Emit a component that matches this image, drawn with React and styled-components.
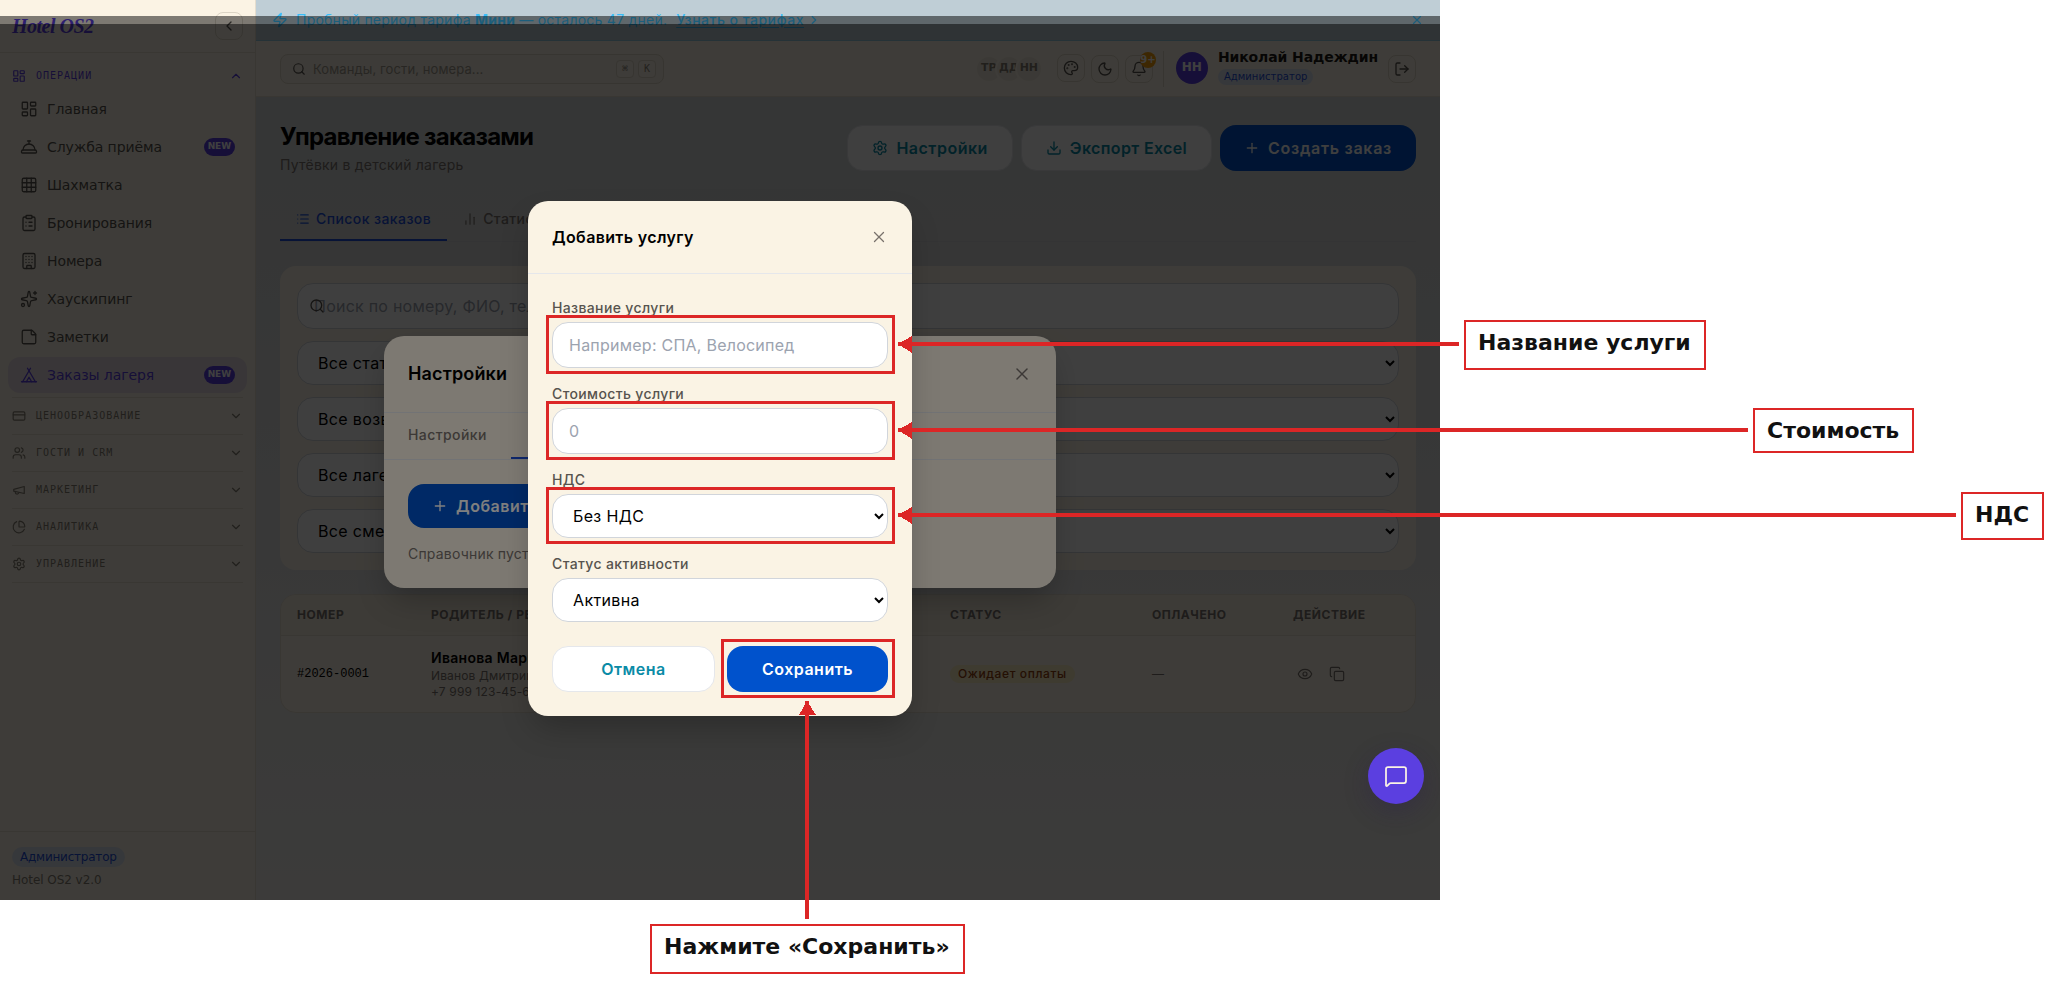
import React from 'react';
import styled, {createGlobalStyle, css} from "styled-components";
import {
    LayoutDashboard, ConciergeBell, Grid3x3, ClipboardList, Building, Sparkles, StickyNote, Tent,
    CreditCard, Users, ChartPie, Settings, ChevronLeft, ChevronUp, ChevronDown, ChevronRight,
    Zap, X, Search, Palette, Moon, Bell, LogOut, Download, Plus, List, ChartNoAxesColumn, Eye, Copy, MessageSquare
} from "lucide-react";

const NAV = [
    {label: "Главная", icon: LayoutDashboard},
    {label: "Служба приёма", icon: ConciergeBell, isNew: true},
    {label: "Шахматка", icon: Grid3x3},
    {label: "Бронирования", icon: ClipboardList},
    {label: "Номера", icon: Building},
    {label: "Хаускипинг", icon: Sparkles},
    {label: "Заметки", icon: StickyNote},
    {label: "Заказы лагеря", icon: Tent, isNew: true, active: true},
];

const SECTIONS = [
    {label: "Ценообразование", icon: CreditCard},
    {label: "Гости и CRM", icon: Users},
    {label: "Маркетинг", icon: Megaphone},
    {label: "Аналитика", icon: ChartPie},
    {label: "Управление", icon: Settings},
];

const FILTERS = ["Все статусы", "Все возвраты", "Все лагеря", "Все смены"];

//annotation layer: frames around fields, arrows and captions
const FRAMES = [
    {x: 546, y: 315, w: 349, h: 59},
    {x: 546, y: 401, w: 349, h: 59},
    {x: 546, y: 487, w: 349, h: 57},
    {x: 721, y: 639, w: 174, h: 59},
];

const ARROWS = [
    {y: 344, to: 1459},
    {y: 430, to: 1748},
    {y: 515, to: 1956},
];

const CAPTIONS = [
    {text: "Название услуги", x: 1464, y: 320, w: 242, h: 50},
    {text: "Стоимость", x: 1753, y: 408, w: 161, h: 45},
    {text: "НДС", x: 1961, y: 492, w: 83, h: 48},
    {text: "Нажмите «Сохранить»", x: 650, y: 924, w: 315, h: 50},
];

export default function App() {
    return <Board>
        <GlobalStyle/>
        <Screen>
            <Sidebar/>
            <Page>
                <TrialBanner/>
                <TopBar/>
                <Orders/>
            </Page>
            <Overlay $top={24}>
                <SettingsModal/>
            </Overlay>
            <Overlay $top={16}>
                <ServiceModal/>
            </Overlay>
            <ChatButton><MessageSquare size={24} strokeWidth={1.75}/></ChatButton>
        </Screen>
        <Annotations/>
    </Board>
}

function Megaphone({size}) {
    return <svg width={size} height={size} viewBox="0 0 24 24" fill="none" stroke="currentColor" strokeWidth="2" strokeLinecap="round" strokeLinejoin="round">
        <path d="m3 11 18-5v12L3 14v-3z"/>
        <path d="M11.6 16.8a3 3 0 1 1-5.8-1.6"/>
    </svg>
}

function Sidebar() {
    return <Aside>
        <Brand>
            <Logo>Hotel OS2</Logo>
            <IconButton><ChevronLeft size={16}/></IconButton>
        </Brand>
        <Nav>
            <SectionHead $open>
                <LayoutDashboard size={14}/>
                <span>Операции</span>
                <ChevronUp size={14}/>
            </SectionHead>
            <NavList>
                {NAV.map(({label, icon: Icon, isNew, active}) => <NavItem key={label} $active={active}>
                    <Icon size={18} strokeWidth={1.75}/>
                    <span>{label}</span>
                    {isNew && <NewBadge>NEW</NewBadge>}
                </NavItem>)}
            </NavList>
            {SECTIONS.map(({label, icon: Icon}) => <Section key={label}>
                <SectionHead>
                    <Icon size={14}/>
                    <span>{label}</span>
                    <ChevronDown size={14}/>
                </SectionHead>
            </Section>)}
        </Nav>
        <AsideFooter>
            <RoleBadge $big>Администратор</RoleBadge>
            <Version>Hotel OS2 v2.0</Version>
        </AsideFooter>
    </Aside>
}

function TrialBanner() {
    return <Banner>
        <Zap size={16}/>
        <BannerText>Пробный период тарифа <b>Мини</b> — осталось 47 дней.</BannerText>
        <BannerLink>Узнать о тарифах</BannerLink>
        <ChevronRight size={14}/>
        <BannerClose><X size={14}/></BannerClose>
    </Banner>
}

function TopBar() {
    return <Bar>
        <CommandBox>
            <Search size={14}/>
            <span>Команды, гости, номера...</span>
            <Kbd>⌘</Kbd>
            <Kbd>K</Kbd>
        </CommandBox>
        <Team>
            <Mate>ТР</Mate>
            <Mate>ДД</Mate>
            <Mate>НН</Mate>
        </Team>
        <Tools>
            <IconButton $raised><Palette size={16}/></IconButton>
            <IconButton><Moon size={16}/></IconButton>
            <IconButton><Bell size={16}/><Counter>9+</Counter></IconButton>
        </Tools>
        <Profile>
            <Avatar>НН</Avatar>
            <div>
                <UserName>Николай Надеждин</UserName>
                <RoleBadge>Администратор</RoleBadge>
            </div>
        </Profile>
        <IconButton><LogOut size={16}/></IconButton>
    </Bar>
}

function Orders() {
    return <Main>
        <PageHead>
            <div>
                <Title>Управление заказами</Title>
                <Subtitle>Путёвки в детский лагерь</Subtitle>
            </div>
            <Actions>
                <Button><Settings size={16}/>Настройки</Button>
                <Button $track={0.35}><Download size={16}/>Экспорт Excel</Button>
                <Button $primary $track={0.72}><Plus size={16}/>Создать заказ</Button>
            </Actions>
        </PageHead>
        <Tabs>
            <Tab $active><List size={14}/>Список заказов</Tab>
            <Tab><ChartNoAxesColumn size={14}/>Статистика</Tab>
        </Tabs>
        <Filters>
            <SearchField>
                <Search size={16}/>
                <Input placeholder="Поиск по номеру, ФИО, телефону"/>
            </SearchField>
            {FILTERS.map(label => <Select key={label}><option>{label}</option></Select>)}
        </Filters>
        <Table>
            <HeadRow>
                <span>Номер</span>
                <span>Родитель / Ребёнок</span>
                <span>Статус</span>
                <span>Оплачено</span>
                <span>Действие</span>
            </HeadRow>
            <Row>
                <OrderNumber>#2026-0001</OrderNumber>
                <div>
                    <Parent>Иванова Мария</Parent>
                    <Small>Иванов Дмитрий</Small>
                    <Small>+7 999 123-45-67</Small>
                </div>
                <div><Status>Ожидает оплаты</Status></div>
                <Small>—</Small>
                <RowActions>
                    <Eye size={16} strokeWidth={1.75}/>
                    <Copy size={16} strokeWidth={1.75}/>
                </RowActions>
            </Row>
        </Table>
    </Main>
}

function SettingsModal() {
    return <Modal $width={672}>
        <ModalHead $large>
            <span>Настройки</span>
            <X size={20} strokeWidth={1.75}/>
        </ModalHead>
        <ModalTabs>
            <ModalTab>Настройки</ModalTab>
            <ModalTab $active>Доп. услуги</ModalTab>
        </ModalTabs>
        <SettingsBody>
            <Button $primary $short><Plus size={16}/>Добавить услугу</Button>
            <Hint>Справочник пуст.</Hint>
        </SettingsBody>
    </Modal>
}

function ServiceModal() {
    return <Modal $width={384}>
        <ModalHead>
            <span>Добавить услугу</span>
            <X size={18} strokeWidth={1.75}/>
        </ModalHead>
        <Form>
            <Field>
                <Label>Название услуги</Label>
                <Input placeholder="Например: СПА, Велосипед"/>
            </Field>
            <Field>
                <Label>Стоимость услуги</Label>
                <Input placeholder="0"/>
            </Field>
            <Field>
                <Label>НДС</Label>
                <Select><option>Без НДС</option></Select>
            </Field>
            <Field>
                <Label>Статус активности</Label>
                <Select><option>Активна</option></Select>
            </Field>
            <FormActions>
                <Button>Отмена</Button>
                <Button $primary>Сохранить</Button>
            </FormActions>
        </Form>
    </Modal>
}

function Annotations() {
    return <>
        <Arrows width="2067" height="997" shapeRendering="crispEdges">
            {FRAMES.map(({x, y, w, h}) =>
                <rect key={`${x}-${y}`} x={x + 1.5} y={y + 1.5} width={w - 3} height={h - 3} fill="none" stroke="#dc2626" strokeWidth="3"/>
            )}
            {ARROWS.map(({y, to}) => <g key={y} fill="#dc2626">
                <rect x="898" y={y - 2} width={to - 898} height="4"/>
                <polygon points={`898,${y} 912,${y - 8} 912,${y + 9}`}/>
            </g>)}
            <g fill="#dc2626">
                <rect x="805" y="701" width="4" height="218"/>
                <polygon points="807,701 799,715 816,715"/>
            </g>
        </Arrows>
        {CAPTIONS.map(({text, ...box}) => <Caption key={text} $box={box}>{text}</Caption>)}
    </>
}

const INTER = `Inter, "Liberation Sans", sans-serif`;
const DEJAVU = `"DejaVu Sans", sans-serif`;
const MONO = `"DejaVu Sans Mono", monospace`;

const CREAM = "#fbf3e4";
const LINE = "#e5ddce";
const LINE_STRONG = "#dcd4c5";
const VIOLET = "#5b3fe0";
const BLUE = "#0052cc";

const GlobalStyle = createGlobalStyle`
    *{
        box-sizing: border-box;
    }
    body{
        margin: 0;
        background: #fff;
        overflow: hidden;
    }
    svg{
        flex: none;
    }
`;

const Board = styled.div`
    position: relative;
    width: 2067px;
    height: 997px;
`;

const Screen = styled.div`
    position: relative;
    display: flex;
    width: 1440px;
    height: 900px;
    overflow: hidden;
    font: 14px/20px ${INTER};
    color: #000;
    background: linear-gradient(180deg, #d3d9d9 0%, #d8dada 25%, #e2e2e2 60%, #f1efeb 100%);
`;

const Aside = styled.aside`
    display: flex;
    flex-direction: column;
    width: 256px;
    background: ${CREAM};
    border-right: 1px solid ${LINE};
    font-family: ${DEJAVU};
`;

const Brand = styled.div`
    display: flex;
    align-items: center;
    justify-content: space-between;
    height: 53px;
    padding: 0 12px;
    border-bottom: 1px solid ${LINE};
`;

const Logo = styled.div`
    font: italic bold 20px/28px "Liberation Serif", serif;
    letter-spacing: -0.5px;
    color: ${VIOLET};
`;

const IconButton = styled.div`
    position: relative;
    display: flex;
    align-items: center;
    justify-content: center;
    width: 28px;
    height: 28px;
    border: 1px solid ${LINE_STRONG};
    border-radius: 8px;
    color: #57534e;
    ${({$raised}) => $raised && css`margin-bottom: 2px;`}
`;

const Nav = styled.nav`
    flex: 1;
    padding-top: 8px;
`;

const SectionHead = styled.div`
    display: flex;
    align-items: center;
    gap: 10px;
    height: 30px;
    padding: 0 12px;
    font: 10px/16px ${MONO};
    letter-spacing: 1px;
    text-transform: uppercase;
    color: ${({$open}) => $open ? VIOLET : "#857e73"};
    span{
        flex: 1;
    }
`;

const NavList = styled.div`
    display: flex;
    flex-direction: column;
    gap: 2px;
    padding: 0 8px 4px;
`;

const NavItem = styled.div`
    display: flex;
    align-items: center;
    gap: 9px;
    height: 36px;
    padding: 0 12px;
    border-radius: 12px;
    letter-spacing: -0.1px;
    color: ${({$active}) => $active ? VIOLET : "#57534e"};
    background: ${({$active}) => $active ? "#e5dbe3" : "none"};
    span{
        flex: 1;
    }
`;

const NewBadge = styled.b`
    height: 18px;
    padding: 0 4px;
    border-radius: 9px;
    font-size: 9px;
    line-height: 16px;
    color: #fff;
    background: ${VIOLET};
`;

const Section = styled.div`
    margin: 0 12px;
    padding: 3px 0;
    border-top: 1px solid ${LINE};
    &:last-child{
        border-bottom: 1px solid ${LINE};
    }
    ${SectionHead}{
        padding: 0;
    }
`;

const AsideFooter = styled.div`
    height: 69px;
    padding: 15px 12px 0;
    border-top: 1px solid ${LINE};
`;

const RoleBadge = styled.div`
    width: fit-content;
    height: ${({$big}) => $big ? 20 : 16}px;
    padding: 0 ${({$big}) => $big ? 8 : 6}px;
    border-radius: 10px;
    font: ${({$big}) => $big ? "12px/20px" : "10px/16px"} ${DEJAVU};
    letter-spacing: ${({$big}) => $big ? -0.22 : 0.05}px;
    color: #1d4ed8;
    background: #dbe2ee;
`;

const Version = styled.div`
    margin-top: 5px;
    font-size: 12px;
    line-height: 16px;
    letter-spacing: -0.05px;
    color: #857e73;
`;

const Page = styled.div`
    flex: 1;
    min-width: 0;
`;

const Banner = styled.div`
    display: flex;
    align-items: center;
    height: 41px;
    padding: 0 16px;
    color: #38bdf8;
    background: #bfced6;
    border-bottom: 1px solid #96c8de;
`;

const BannerText = styled.span`
    margin: 0 9px 0 8px;
    letter-spacing: 0.24px;
`;

const BannerLink = styled.span`
    margin-right: 3px;
    font-weight: 500;
    letter-spacing: 0.5px;
    text-decoration: underline;
    text-underline-offset: 2px;
`;

const BannerClose = styled.span`
    display: flex;
    margin-left: auto;
`;

const Bar = styled.header`
    display: flex;
    align-items: center;
    height: 56px;
    padding: 0 24px;
    font-family: ${DEJAVU};
    background: ${CREAM};
    border-bottom: 1px solid ${LINE};
`;

const CommandBox = styled.div`
    display: flex;
    align-items: center;
    gap: 4px;
    width: 384px;
    height: 30px;
    margin-right: auto;
    padding: 0 7px 0 11px;
    border: 1px solid ${LINE_STRONG};
    border-radius: 8px;
    font: 13px/20px ${INTER};
    letter-spacing: 0.1px;
    color: #57534e;
    background: #f6eee0;
    span{
        flex: 1;
        margin-left: 3px;
        color: #a09a8e;
    }
`;

const Kbd = styled.kbd`
    width: 18px;
    height: 18px;
    border: 1px solid ${LINE_STRONG};
    border-radius: 4px;
    font: 10px/15px ${MONO};
    text-align: center;
    color: #8d867a;
    background: ${CREAM};
`;

const Team = styled.div`
    display: flex;
    margin-right: 14px;
`;

const Mate = styled.div`
    width: 28px;
    height: 28px;
    margin-left: -8px;
    border: 2px solid ${CREAM};
    border-radius: 50%;
    font: bold 11px/22px ${DEJAVU};
    text-align: center;
    white-space: nowrap;
    color: #857e73;
    background: #efe7d9;
`;

const Tools = styled.div`
    display: flex;
    align-items: center;
    gap: 6px;
    height: 36px;
    padding-right: 10px;
    border-right: 1px solid ${LINE_STRONG};
`;

const Counter = styled.b`
    position: absolute;
    top: -4px;
    right: -4px;
    width: 16px;
    height: 16px;
    border-radius: 8px;
    font-size: 10px;
    line-height: 15px;
    text-align: center;
    color: #fff;
    background: #f59e0b;
`;

const Profile = styled.div`
    display: flex;
    gap: 10px;
    margin: 0 10px 0 12px;
`;

const Avatar = styled.div`
    width: 32px;
    height: 32px;
    border-radius: 50%;
    font: bold 12px/31px ${DEJAVU};
    text-align: center;
    color: #fff;
    background: ${VIOLET};
`;

const UserName = styled.div`
    height: 17px;
    font-size: 14px;
    font-weight: bold;
    line-height: 11px;
    letter-spacing: -0.1px;
    color: #1c1917;
`;

const Main = styled.main`
    padding: 24px;
`;

const PageHead = styled.div`
    display: flex;
    justify-content: space-between;
    align-items: center;
    height: 54px;
`;

const Title = styled.h1`
    margin: 0;
    font-size: 24px;
    line-height: 32px;
    letter-spacing: -0.74px;
`;

const Subtitle = styled.div`
    margin-top: 2px;
    letter-spacing: 0.22px;
    color: #78716c;
`;

const Actions = styled.div`
    display: flex;
    gap: 8px;
`;

const Button = styled.div`
    display: flex;
    align-items: center;
    justify-content: center;
    gap: 8px;
    height: ${({$short}) => $short ? 44 : 46}px;
    padding: 0 24px;
    border-radius: 16px;
    font: 600 16px/24px ${INTER};
    letter-spacing: ${({$track = 0.5}) => $track}px;
    ${({$primary}) => $primary ? css`
        color: #fff;
        background: ${BLUE};
    ` : css`
        color: #0a8ba6;
        background: #fff;
        border: 1px solid #e5e7eb;
    `}
`;

const Tabs = styled.div`
    display: flex;
    height: 47px;
    margin: 20px 0 24px;
    border-bottom: 1px solid #d2d2d6;
`;

const Tab = styled.div`
    display: flex;
    align-items: center;
    gap: 6px;
    padding: 4px 16px 0;
    font-weight: 500;
    letter-spacing: 0.42px;
    color: ${({$active}) => $active ? "#1d4ed8" : "#78716c"};
    border-bottom: 2px solid ${({$active}) => $active ? "#1d4ed8" : "transparent"};
`;

const Filters = styled.div`
    display: flex;
    flex-direction: column;
    gap: 12px;
    padding: 17px;
    border-radius: 16px;
    background: ${CREAM};
`;

const SearchField = styled.div`
    position: relative;
    display: flex;
    svg{
        position: absolute;
        left: 12px;
        top: 15px;
        color: #57534e;
    }
`;

const fieldStyles = css`
    display: block;
    width: 100%;
    border: 1px solid #d1d5db;
    border-radius: 16px;
    font: 16px/24px ${INTER};
    color: #000;
    background: #fff;
`;

const Input = styled.input`
    ${fieldStyles}
    height: 46px;
    padding: 0 16px;
    letter-spacing: 0.24px;
    &::placeholder{
        color: #9ca3af;
        opacity: 1;
    }
`;

const Select = styled.select`
    ${fieldStyles}
    height: 44px;
    padding: 0 16px;
    letter-spacing: 0.35px;
`;

const Table = styled.div`
    height: 119px;
    margin-top: 24px;
    border: 1px solid ${LINE};
    border-radius: 16px;
    overflow: hidden;
    background: ${CREAM};
`;

const HeadRow = styled.div`
    display: grid;
    grid-template-columns: 134px 519px 202px 141px 1fr;
    align-items: center;
    height: 41px;
    padding: 0 16px;
    border-bottom: 1px solid ${LINE};
    font-size: 12px;
    font-weight: 700;
    letter-spacing: 0.55px;
    text-transform: uppercase;
    color: #78716c;
    background: #f4ecdd;
`;

const Row = styled(HeadRow)`
    height: 76px;
    border: none;
    font-weight: 400;
    letter-spacing: 0;
    text-transform: none;
    background: none;
`;

const OrderNumber = styled.span`
    font: 12px/16px "Liberation Mono", monospace;
    color: #000;
`;

const Parent = styled.div`
    font-size: 14px;
    font-weight: 600;
    line-height: 20px;
    letter-spacing: 0.3px;
    color: #000;
`;

const Small = styled.div`
    font-size: 12px;
    line-height: 16px;
    letter-spacing: 0.15px;
`;

const Status = styled.div`
    width: fit-content;
    padding: 0 8px;
    border-radius: 9px;
    font-weight: 500;
    line-height: 18px;
    letter-spacing: 0.62px;
    color: #92400e;
    background: #fbecc0;
`;

const RowActions = styled.div`
    display: flex;
    gap: 16px;
    padding-left: 4px;
`;

const Overlay = styled.div`
    position: absolute;
    top: ${({$top}) => $top}px;
    right: 0;
    bottom: 0;
    left: 0;
    display: flex;
    align-items: center;
    justify-content: center;
    background: rgba(0, 0, 0, 0.5);
`;

const Modal = styled.div`
    width: ${({$width}) => $width}px;
    border-radius: 20px;
    background: #faf3e4;
    box-shadow: 0 16px 32px -6px rgba(0, 0, 0, 0.25);
    overflow: hidden;
`;

const ModalHead = styled.div`
    display: flex;
    align-items: center;
    justify-content: space-between;
    height: ${({$large}) => $large ? 77 : 73}px;
    padding: 0 24px;
    border-bottom: 1px solid #e5e7eb;
    font-size: ${({$large}) => $large ? 18 : 16}px;
    font-weight: 600;
    letter-spacing: ${({$large}) => $large ? 0.15 : 0.36}px;
    svg{
        color: #78716c;
    }
`;

const ModalTabs = styled.div`
    display: flex;
    height: 47px;
    border-bottom: 1px solid #e5e7eb;
`;

const ModalTab = styled.div`
    padding: 0 24px;
    font-weight: 500;
    line-height: 43px;
    letter-spacing: 0.42px;
    color: ${({$active}) => $active ? "#1d4ed8" : "#78716c"};
    border-bottom: 2px solid ${({$active}) => $active ? "#1d4ed8" : "transparent"};
`;

const SettingsBody = styled.div`
    padding: 24px;
    ${Button}{
        width: fit-content;
    }
`;

const Hint = styled.div`
    margin-top: 16px;
    letter-spacing: 0.2px;
    color: #78716c;
`;

const Form = styled.div`
    display: flex;
    flex-direction: column;
    gap: 16px;
    padding: 24px;
`;

const Field = styled.div`
    display: flex;
    flex-direction: column;
    gap: 4px;
`;

const Label = styled.label`
    font-weight: 500;
    letter-spacing: 0.36px;
    color: #57534e;
`;

const FormActions = styled.div`
    display: flex;
    gap: 12px;
    margin-top: 8px;
    ${Button}{
        flex: 1;
    }
`;

const ChatButton = styled.div`
    position: absolute;
    right: 16px;
    bottom: 96px;
    display: flex;
    align-items: center;
    justify-content: center;
    width: 56px;
    height: 56px;
    border-radius: 50%;
    color: ${CREAM};
    background: ${VIOLET};
    box-shadow: 0 8px 24px rgba(40, 25, 80, 0.3);
`;

const Arrows = styled.svg`
    position: absolute;
    top: 0;
    left: 0;
`;

const Caption = styled.div`
    position: absolute;
    left: ${({$box}) => $box.x}px;
    top: ${({$box}) => $box.y}px;
    width: ${({$box}) => $box.w}px;
    height: ${({$box}) => $box.h}px;
    padding: 7px 12px;
    border: 2px solid #dc2626;
    font: bold 22px/27px ${DEJAVU};
    white-space: nowrap;
    color: #111;
    background: #fff;
`;
